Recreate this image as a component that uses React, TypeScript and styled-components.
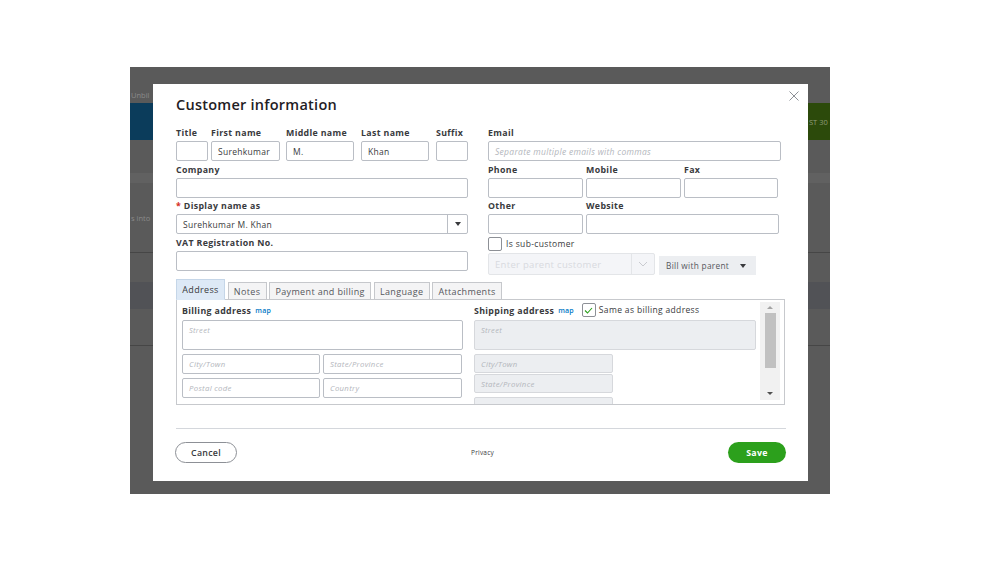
import React from 'react';
import styled, { createGlobalStyle } from 'styled-components';

const GlobalStyle = createGlobalStyle`
  html, body {
    margin: 0;
    padding: 0;
    background: #fff;
  }
  body {
    font-family: 'Open Sans', 'Liberation Sans', sans-serif;
    color: #393a3d;
  }
  * {
    box-sizing: border-box;
  }
`;

const CloseIcon = () => (
	<svg width="10" height="10" viewBox="0 0 10 10">
		<path d="M0.5 0.5 L9.5 9.5 M9.5 0.5 L0.5 9.5" stroke="#8d9096" strokeWidth="1" />
	</svg>
);

const Caret = () => (
	<svg width="6" height="4" viewBox="0 0 6 4">
		<polygon points="0,0 6,0 3,4" fill="#393a3d" />
	</svg>
);

const Chevron = () => (
	<svg width="10" height="6" viewBox="0 0 10 6">
		<polyline points="1,1 5,5 9,1" fill="none" stroke="#c9cbd0" strokeWidth="1" />
	</svg>
);

const Check = () => (
	<svg width="9" height="7" viewBox="0 0 9 7">
		<polyline points="1,3.5 3.5,6 8,1" fill="none" stroke="#2ca01c" strokeWidth="1.1" />
	</svg>
);

const App: React.FC = () => {
	return (
		<Page>
			<GlobalStyle />
			<Overlay>
				<Backdrop>
					<BackRow $h={36} $pt={20}>
						<Cell>Unbil</Cell>
					</BackRow>
					<BackRow $h={37}>
						<Cell $bg="#0b3c5b" />
						<Cell />
						<Cell $bg="#2c4a0b" $color="#8e9c78">
							ST 30
						</Cell>
					</BackRow>
					<BackRow $h={33} />
					<BackRow $h={10} $bg="#616161" />
					<BackRow $h={70} $line>
						<Cell>s into</Cell>
					</BackRow>
					<BackRow $h={29} />
					<BackRow $h={27} $bg="#515256" />
					<BackRow $h={37} $line />
				</Backdrop>

				<Modal>
					<CloseButton>
						<CloseIcon />
					</CloseButton>
					<Header>
						<Title>Customer information</Title>
					</Header>

					<FormGrid>
						<Column>
							<NameRow>
								<Field $w={32}>
									<Label>Title</Label>
									<Input />
								</Field>
								<Field $w={69} $gap={3}>
									<Label>First name</Label>
									<Input>Surehkumar</Input>
								</Field>
								<Field $w={68} $gap={6}>
									<Label>Middle name</Label>
									<Input>M.</Input>
								</Field>
								<Field $w={68} $gap={7}>
									<Label>Last name</Label>
									<Input>Khan</Input>
								</Field>
								<Field $w={32} $gap={7}>
									<Label>Suffix</Label>
									<Input />
								</Field>
							</NameRow>
							<Field>
								<Label>Company</Label>
								<Input />
							</Field>
							<Field>
								<Label>
									<Required>*</Required> Display name as
								</Label>
								<Select>
									<SelectText>Surehkumar M. Khan</SelectText>
									<SelectToggle>
										<Caret />
									</SelectToggle>
								</Select>
							</Field>
							<Field>
								<Label>VAT Registration No.</Label>
								<Input />
							</Field>
						</Column>

						<Column>
							<Field>
								<Label>Email</Label>
								<Input $placeholder>Separate multiple emails with commas</Input>
							</Field>
							<PhoneRow>
								<Field>
									<Label>Phone</Label>
									<Input />
								</Field>
								<Field>
									<Label>Mobile</Label>
									<Input />
								</Field>
								<Field>
									<Label>Fax</Label>
									<Input />
								</Field>
							</PhoneRow>
							<OtherRow>
								<Field>
									<Label>Other</Label>
									<Input />
								</Field>
								<Field>
									<Label>Website</Label>
									<Input />
								</Field>
							</OtherRow>
							<CheckRow>
								<CheckBox />
								<CheckText>Is sub-customer</CheckText>
							</CheckRow>
							<ParentRow>
								<ParentInput>
									<ParentText>Enter parent customer</ParentText>
									<ParentToggle>
										<Chevron />
									</ParentToggle>
								</ParentInput>
								<BillSelect>
									<span>Bill with parent</span>
									<Caret />
								</BillSelect>
							</ParentRow>
						</Column>
					</FormGrid>

					<Tabs>
						<Tab $active>Address</Tab>
						<Tab>Notes</Tab>
						<Tab>Payment and billing</Tab>
						<Tab>Language</Tab>
						<Tab>Attachments</Tab>
					</Tabs>

					<Panel>
						<AddressCol>
							<SectionLabel>
								Billing address <MapLink>map</MapLink>
							</SectionLabel>
							<Street>Street</Street>
							<AddressPair>
								<AddrInput>City/Town</AddrInput>
								<AddrInput>State/Province</AddrInput>
							</AddressPair>
							<AddressPair>
								<AddrInput>Postal code</AddrInput>
								<AddrInput>Country</AddrInput>
							</AddressPair>
						</AddressCol>

						<AddressCol>
							<SectionLabel>
								Shipping address <MapLink>map</MapLink>
								<SameBox>
									<Check />
								</SameBox>
								<SameText>Same as billing address</SameText>
							</SectionLabel>
							<Street $disabled>Street</Street>
							<ShipStack>
								<ShipInput>City/Town</ShipInput>
								<ShipInput>State/Province</ShipInput>
								<ShipInput />
							</ShipStack>
						</AddressCol>

						<Scrollbar>
							<ScrollArrow $up />
							<ScrollThumb />
							<ScrollArrow />
						</Scrollbar>
					</Panel>

					<Divider />

					<Footer>
						<CancelButton>Cancel</CancelButton>
						<Privacy>Privacy</Privacy>
						<SaveButton>Save</SaveButton>
					</Footer>
				</Modal>
			</Overlay>
		</Page>
	);
};

export default App;

const Page = styled.div`
	width: 999px;
	height: 562px;
	padding: 67px 0 0 130px;
	overflow: hidden;
	background: #fff;
`;

const Overlay = styled.div`
	position: relative;
	width: 700px;
	height: 427px;
	background: #5a5a5a;
	overflow: hidden;
`;

const Backdrop = styled.div`
	display: flex;
	flex-direction: column;
`;

const BackRow = styled.div<{ $h: number; $bg?: string; $line?: boolean; $pt?: number }>`
	height: ${(p) => p.$h}px;
	background: ${(p) => p.$bg ?? '#5a5a5a'};
	border-bottom: ${(p) => (p.$line ? '1px solid #464646' : 'none')};
	padding-top: ${(p) => p.$pt ?? 0}px;
	display: grid;
	grid-template-columns: 23px 1fr 22px;
	align-items: ${(p) => (p.$pt ? 'start' : 'center')};
`;

const Cell = styled.div<{ $bg?: string; $color?: string }>`
	height: 100%;
	display: flex;
	align-items: center;
	background: ${(p) => p.$bg ?? 'transparent'};
	color: ${(p) => p.$color ?? '#8a8a8a'};
	font-size: 7.5px;
	line-height: 10px;
	white-space: nowrap;
	padding-left: 1px;
`;

const Modal = styled.div`
	position: absolute;
	left: 23px;
	top: 17px;
	width: 655px;
	height: 397px;
	background: #fff;
	padding: 0 22px 0 23px;
	display: flex;
	flex-direction: column;
`;

const CloseButton = styled.div`
	position: absolute;
	top: 7px;
	right: 9px;
	width: 10px;
	height: 10px;
	display: flex;
`;

const Header = styled.div`
	height: 30px;
	padding-top: 12px;
`;

const Title = styled.h1`
	margin: 0;
	font-size: 14.5px;
	line-height: 18px;
	font-weight: 600;
	color: #1f2024;
	letter-spacing: 0.25px;
`;

const FormGrid = styled.div`
	margin-top: 13px;
	display: grid;
	grid-template-columns: 292px 293px;
	column-gap: 20px;
	align-items: start;
`;

const Column = styled.div`
	display: flex;
	flex-direction: column;
	gap: 2.5px;
`;

const Field = styled.div<{ $w?: number; $gap?: number }>`
	display: flex;
	flex-direction: column;
	min-width: 0;
	width: ${(p) => (p.$w ? `${p.$w}px` : 'auto')};
	margin-left: ${(p) => p.$gap ?? 0}px;
	flex-shrink: 0;
`;

const Label = styled.div`
	height: 12px;
	line-height: 12px;
	margin-bottom: 2px;
	font-size: 8.8px;
	font-weight: 700;
	letter-spacing: 0.35px;
	color: #393a3d;
	white-space: nowrap;
`;

const Required = styled.span`
	color: #d52b1e;
`;

const Input = styled.div<{ $placeholder?: boolean }>`
	height: 20px;
	border: 1px solid #babec5;
	border-radius: 2px;
	padding: 0 6px;
	display: flex;
	align-items: center;
	font-size: 8.5px;
	letter-spacing: 0.3px;
	white-space: nowrap;
	overflow: hidden;
	color: ${(p) => (p.$placeholder ? '#b3b6bc' : '#393a3d')};
	font-style: ${(p) => (p.$placeholder ? 'italic' : 'normal')};
`;

const NameRow = styled.div`
	display: flex;
`;

const PhoneRow = styled.div`
	display: grid;
	grid-template-columns: 95px 95px 94px;
	column-gap: 3px;
`;

const OtherRow = styled.div`
	display: grid;
	grid-template-columns: 95px 193px;
	column-gap: 3px;
`;

const Select = styled.div`
	height: 20px;
	border: 1px solid #babec5;
	border-radius: 2px;
	display: flex;
	align-items: stretch;
`;

const SelectText = styled.div`
	flex: 1;
	display: flex;
	align-items: center;
	padding-left: 6px;
	font-size: 8.5px;
	letter-spacing: 0.3px;
`;

const SelectToggle = styled.div`
	width: 20px;
	border-left: 1px solid #babec5;
	display: flex;
	align-items: center;
	justify-content: center;
`;

const CheckRow = styled.div`
	display: flex;
	align-items: center;
	gap: 4px;
	height: 14px;
`;

const CheckBox = styled.div`
	width: 14px;
	height: 14px;
	border: 1px solid #8d9096;
	border-radius: 2px;
	background: #fff;
`;

const CheckText = styled.span`
	font-size: 8.5px;
	letter-spacing: 0.35px;
	color: #393a3d;
`;

const ParentRow = styled.div`
	display: flex;
	align-items: flex-end;
	gap: 4px;
`;

const ParentInput = styled.div`
	width: 167px;
	height: 22px;
	border: 1px solid #e3e5e8;
	border-radius: 2px;
	background: #f4f5f8;
	display: flex;
`;

const ParentText = styled.div`
	flex: 1;
	display: flex;
	align-items: center;
	padding-left: 6px;
	font-size: 9.5px;
	letter-spacing: 0.3px;
	color: #d8dadf;
	white-space: nowrap;
	overflow: hidden;
`;

const ParentToggle = styled.div`
	width: 23px;
	border-left: 1px solid #e3e5e8;
	display: flex;
	align-items: center;
	justify-content: center;
`;

const BillSelect = styled.div`
	width: 97px;
	height: 19px;
	background: #eceef1;
	display: flex;
	align-items: center;
	justify-content: space-between;
	padding: 0 10px 0 7px;
	font-size: 8.3px;
	letter-spacing: 0.3px;
	color: #55575c;
`;

const Tabs = styled.div`
	margin-top: 4px;
	display: flex;
	align-items: flex-end;
	height: 21px;
	position: relative;
	z-index: 1;
	margin-bottom: -1px;
`;

const Tab = styled.div<{ $active?: boolean }>`
	height: ${(p) => (p.$active ? '21px' : '18px')};
	margin-right: 2.5px;
	padding: 0 5.3px;
	display: flex;
	align-items: center;
	font-size: 9px;
	letter-spacing: 0.35px;
	white-space: nowrap;
	color: ${(p) => (p.$active ? '#393a3d' : '#55575c')};
	background: ${(p) => (p.$active ? '#dde9f6' : '#f4f4f5')};
	border: 1px solid ${(p) => (p.$active ? '#c5d6e8' : '#c6c8cc')};
	border-bottom-color: ${(p) => (p.$active ? '#dde9f6' : '#c6c8cc')};
`;

const Panel = styled.div`
	width: 609px;
	height: 106px;
	border: 1px solid #c7c9cd;
	padding: 5px 12px 0 5px;
	display: grid;
	grid-template-columns: 281px 282px 13px;
	column-gap: 11px;
	overflow: hidden;
`;

const AddressCol = styled.div`
	display: flex;
	flex-direction: column;
	min-width: 0;
`;

const SectionLabel = styled.div`
	height: 12px;
	line-height: 12px;
	display: flex;
	align-items: center;
	font-size: 8.8px;
	font-weight: 700;
	letter-spacing: 0.35px;
	color: #393a3d;
	white-space: nowrap;
`;

const MapLink = styled.span`
	margin-left: 4px;
	font-size: 7px;
	font-weight: 600;
	letter-spacing: 0.2px;
	color: #0077c5;
`;

const SameBox = styled.div`
	width: 14px;
	height: 14px;
	margin-left: 8px;
	border: 1px solid #8d9096;
	border-radius: 2px;
	display: flex;
	align-items: center;
	justify-content: center;
	margin-top: -2px;
`;

const SameText = styled.span`
	margin-left: 3px;
	margin-top: -2px;
	font-size: 8.5px;
	font-weight: 400;
	letter-spacing: 0.35px;
	color: #393a3d;
`;

const Street = styled.div<{ $disabled?: boolean }>`
	margin-top: 3px;
	height: 30px;
	border: 1px solid ${(p) => (p.$disabled ? '#d6d8dc' : '#babec5')};
	background: ${(p) => (p.$disabled ? '#eceef1' : '#fff')};
	border-radius: 2px;
	padding: 4px 6px;
	font-size: 7.5px;
	letter-spacing: 0.3px;
	font-style: italic;
	color: #b3b6bc;
`;

const AddressPair = styled.div`
	margin-top: 4px;
	display: grid;
	grid-template-columns: 138px 139px;
	column-gap: 3px;
`;

const AddrInput = styled.div`
	height: 20px;
	border: 1px solid #babec5;
	border-radius: 2px;
	padding: 0 6px;
	display: flex;
	align-items: center;
	font-size: 7.8px;
	letter-spacing: 0.3px;
	font-style: italic;
	color: #b3b6bc;
`;

const ShipStack = styled.div`
	margin-top: 4px;
	display: flex;
	flex-direction: column;
	gap: 1px;
	width: 139px;
`;

const ShipInput = styled.div`
	height: 19px;
	flex-shrink: 0;
	border: 1px solid #d6d8dc;
	background: #eceef1;
	border-radius: 2px;
	padding: 0 6px;
	display: flex;
	align-items: center;
	font-size: 7.8px;
	letter-spacing: 0.3px;
	font-style: italic;
	color: #b3b6bc;
	&:last-child {
		margin-top: 3px;
	}
`;

const Scrollbar = styled.div`
	margin-top: -3px;
	margin-left: -7px;
	height: 98px;
	background: #f1f1f1;
	display: flex;
	flex-direction: column;
	align-items: center;
`;

const ScrollArrow = styled.div<{ $up?: boolean }>`
	width: 0;
	height: 0;
	margin: ${(p) => (p.$up ? '4px 0 4px' : 'auto 0 5px')};
	border-left: 3px solid transparent;
	border-right: 3px solid transparent;
	${(p) =>
		p.$up
			? 'border-bottom: 3px solid #a3a3a3;'
			: 'border-top: 3px solid #505050;'}
`;

const ScrollThumb = styled.div`
	width: 11px;
	height: 55px;
	background: #c1c1c1;
`;

const Divider = styled.div`
	margin-top: 23px;
	height: 1px;
	background: #d4d7dc;
`;

const Footer = styled.div`
	margin-top: 13px;
	display: flex;
	align-items: center;
	justify-content: space-between;
`;

const CancelButton = styled.div`
	width: 62px;
	height: 21px;
	margin-left: -1px;
	border: 1px solid #8d9096;
	border-radius: 11px;
	display: flex;
	align-items: center;
	justify-content: center;
	font-size: 8.8px;
	font-weight: 600;
	letter-spacing: 0.3px;
	color: #393a3d;
`;

const Privacy = styled.div`
	font-size: 6.5px;
	letter-spacing: 0.2px;
	color: #393a3d;
`;

const SaveButton = styled.div`
	width: 58px;
	height: 21px;
	border-radius: 11px;
	background: #2ca01c;
	display: flex;
	align-items: center;
	justify-content: center;
	font-size: 8.8px;
	font-weight: 700;
	letter-spacing: 0.3px;
	color: #fff;
`;
